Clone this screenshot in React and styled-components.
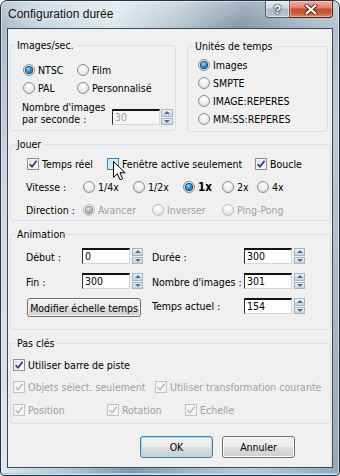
import styled, { createGlobalStyle } from 'styled-components';

const GlobalStyle = createGlobalStyle`
  html, body {
    margin: 0;
    padding: 0;
    background: #ffffff;
  }
  body {
    font-family: 'DejaVu Sans Condensed', 'Liberation Sans', Arial, sans-serif;
    font-size: 10.5px;
    color: #000;
  }
`;

const CheckMark = ({ disabled }) => (
  <svg width="10" height="10" viewBox="0 0 10 10">
    <path
      d="M1.6 5.2 L4 7.8 L8.6 1.8"
      fill="none"
      stroke={disabled ? '#a8a8a8' : '#27387a'}
      strokeWidth={disabled ? 1.1 : 1.7}
    />
  </svg>
);

const Radio = ({ on, disabled, bold, children }) => (
  <Choice $disabled={disabled} $bold={bold}>
    <RadioDot $on={on} $disabled={disabled} />
    {children}
  </Choice>
);

const Check = ({ on, disabled, hover, children }) => (
  <Choice $disabled={disabled}>
    <CheckBox $disabled={disabled} $hover={hover}>
      {on && <CheckMark disabled={disabled} />}
    </CheckBox>
    {children}
  </Choice>
);

const SpinField = ({ value, disabled, gap = 2, spinWidth = 11 }) => (
  <Field $gap={gap}>
    <Edit $disabled={disabled}>{value}</Edit>
    <Spin $w={spinWidth}>
      <SpinHalf>
        <Arrow $up />
      </SpinHalf>
      <SpinHalf>
        <Arrow />
      </SpinHalf>
    </Spin>
  </Field>
);

const Cursor = () => (
  <CursorWrap>
    <svg width="13" height="20" viewBox="0 0 13 20">
      <path
        d="M0.5 0.5 L0.5 16.5 L4.3 12.8 L7 18.8 L9.6 17.7 L7 11.8 L12.2 11.8 Z"
        fill="#fff"
        stroke="#000"
        strokeWidth="1"
        strokeLinejoin="miter"
      />
    </svg>
  </CursorWrap>
);

const App = () => (
  <>
    <GlobalStyle />
    <Window>
      <TitleBar>
        <Title>Configuration durée</Title>
        <CaptionButtons>
          <HelpButton>?</HelpButton>
          <CloseButton>
            <svg width="14" height="11" viewBox="0 0 14 11">
              <path d="M2.5 1.5 L11.5 9.5 M11.5 1.5 L2.5 9.5" stroke="#5b2418" strokeWidth="4" strokeLinecap="round" />
              <path d="M2.5 1.5 L11.5 9.5 M11.5 1.5 L2.5 9.5" stroke="#fff" strokeWidth="2.2" strokeLinecap="round" />
            </svg>
          </CloseButton>
        </CaptionButtons>
      </TitleBar>

      <Client>
        <TopRow>
          <Group $w={166} $h={92}>
            <Legend>Images/sec.</Legend>
            <Body $pad="10px 0 0 12px">
              <Line $cols="54px auto" $h={18}>
                <Radio on>NTSC</Radio>
                <Radio>Film</Radio>
              </Line>
              <Line $cols="54px auto" $h={18}>
                <Radio>PAL</Radio>
                <Radio>Personnalisé</Radio>
              </Line>
              <RateRow>
                <RateLabel>
                  Nombre d'images
                  <br />
                  par seconde :
                </RateLabel>
                <SpinField value="30" disabled gap={1} spinWidth={12} />
              </RateRow>
            </Body>
          </Group>

          <Group $w={141} $h={92}>
            <Legend $x={5}>Unités de temps</Legend>
            <Body $pad="4px 0 0 10px">
              <Line $cols="auto" $h={18}>
                <Radio on>Images</Radio>
              </Line>
              <Line $cols="auto" $h={18}>
                <Radio>SMPTE</Radio>
              </Line>
              <Line $cols="auto" $h={18}>
                <Radio>IMAGE:REPERES</Radio>
              </Line>
              <Line $cols="auto" $h={18}>
                <Radio>MM:SS:REPERES</Radio>
              </Line>
            </Body>
          </Group>
        </TopRow>

        <Group $h={83}>
          <Legend>Jouer</Legend>
          <Body $pad="5px 0 0 15px" $gap={6}>
            <Line $cols="80px 148px auto" $h={17} $indent={1}>
              <Check on>Temps réel</Check>
              <Check hover>Fenêtre active seulement</Check>
              <Check on>Boucle</Check>
            </Line>
            <Line $cols="57px 50px 50px 39px 35px auto" $h={17}>
              <span>Vitesse :</span>
              <Radio>1/4x</Radio>
              <Radio>1/2x</Radio>
              <Radio on bold>1x</Radio>
              <Radio>2x</Radio>
              <Radio>4x</Radio>
            </Line>
            <Line $cols="57px 69px 70px auto" $h={17}>
              <span>Direction :</span>
              <Radio on disabled>Avancer</Radio>
              <Radio disabled>Inverser</Radio>
              <Radio disabled>Ping-Pong</Radio>
            </Line>
          </Body>
        </Group>

        <Group $h={102}>
          <Legend>Animation</Legend>
          <Body $pad="8px 0 0 15px" $gap={9}>
            <Line $cols="56px 70px 92px auto" $h={16}>
              <FieldLabel>Début :</FieldLabel>
              <SpinField value="0" />
              <FieldLabel>Durée :</FieldLabel>
              <SpinField value="300" />
            </Line>
            <Line $cols="56px 70px 92px auto" $h={16}>
              <FieldLabel>Fin :</FieldLabel>
              <SpinField value="300" />
              <FieldLabel>Nombre d'images :</FieldLabel>
              <SpinField value="301" />
            </Line>
            <Line $cols="126px 92px auto" $h={19} $align="start">
              <PushButton $w={114} $h={19} $indent={1}>
                Modifier échelle temps
              </PushButton>
              <FieldLabel>Temps actuel :</FieldLabel>
              <SpinField value="154" />
            </Line>
          </Body>
        </Group>

        <Group $h={87}>
          <Legend>Pas clés</Legend>
          <Body $pad="7px 0 0 2px" $gap={5}>
            <Line $cols="auto" $h={17}>
              <Check on>Utiliser barre de piste</Check>
            </Line>
            <Line $cols="142px auto" $h={17}>
              <Check on disabled>Objets sélect. seulement</Check>
              <Check on disabled>Utiliser transformation courante</Check>
            </Line>
            <Line $cols="94px 78px auto" $h={17} $top={1}>
              <Check on disabled>Position</Check>
              <Check on disabled>Rotation</Check>
              <Check on disabled>Echelle</Check>
            </Line>
          </Body>
        </Group>

        <Footer>
          <PushButton $w={73} $h={22} $default>
            OK
          </PushButton>
          <PushButton $w={73} $h={22}>
            Annuler
          </PushButton>
        </Footer>
      </Client>

      <Cursor />
    </Window>
  </>
);

export default App;

const Window = styled.div`
  position: relative;
  width: 340px;
  height: 476px;
  box-sizing: border-box;
  display: flex;
  flex-direction: column;
  padding: 0 6px 7px;
  border: 1px solid #27323c;
  border-radius: 7px 7px 4px 4px;
  overflow: hidden;
  background:
    linear-gradient(to bottom, rgba(255, 255, 255, 0.3) 0, rgba(255, 255, 255, 0) 28px),
    linear-gradient(
      104deg,
      #a2b4c3 0%,
      #cbd7e0 10%,
      #dde6ec 26%,
      #b7c6d1 40%,
      #8197aa 54%,
      #a3b4c2 66%,
      #bccad4 80%,
      #93a8b9 100%
    );
  box-shadow:
    inset 0 0 0 1px rgba(255, 255, 255, 0.45),
    inset 0 -2px 0 #9fd3ea;
`;

const TitleBar = styled.div`
  height: 27px;
  flex: none;
  display: flex;
  align-items: flex-start;
`;

const Title = styled.div`
  margin: 6px 0 0 1px;
  font-family: 'Liberation Sans', Arial, sans-serif;
  font-size: 12px;
  line-height: 14px;
  color: #111;
  text-shadow: 0 0 6px rgba(255, 255, 255, 0.9);
`;

const CaptionButtons = styled.div`
  margin-left: auto;
  display: flex;
  height: 17px;
`;

const HelpButton = styled.div`
  width: 25px;
  box-sizing: border-box;
  border: 1px solid #4d5b67;
  border-top: none;
  border-radius: 0 0 0 4px;
  background: linear-gradient(#e4eaef 0%, #ccd6de 45%, #a9b7c3 52%, #bac7d1 100%);
  box-shadow: inset 0 0 0 1px rgba(255, 255, 255, 0.5);
  display: flex;
  align-items: center;
  justify-content: center;
  color: #fff;
  font: bold 13px 'Liberation Sans', Arial, sans-serif;
  text-shadow: 0 0 1px #2b3640, 0 0 2px #2b3640, 0 0 2px #2b3640;
`;

const CloseButton = styled.div`
  width: 43px;
  box-sizing: border-box;
  border: 1px solid #5a2216;
  border-top: none;
  border-left: none;
  border-radius: 0 0 4px 0;
  background: linear-gradient(#eeb2a3 0%, #dc806a 42%, #c34a2f 52%, #cf5c3d 78%, #e48e6a 100%);
  box-shadow: inset 0 0 0 1px rgba(255, 220, 210, 0.45);
  display: flex;
  align-items: center;
  justify-content: center;
`;

const Client = styled.div`
  flex: 1;
  display: flex;
  flex-direction: column;
  gap: 6px;
  padding: 10px 1px 0 2px;
  border: 1px solid #3b4752;
  background: #f0f0f0;
`;

const TopRow = styled.div`
  display: flex;
  gap: 11px;
`;

const Group = styled.fieldset`
  margin: 0;
  padding: 0;
  min-width: 0;
  box-sizing: border-box;
  width: ${(p) => (p.$w ? `${p.$w}px` : 'auto')};
  height: ${(p) => p.$h}px;
  flex: none;
  border: 1px solid #d5dfe5;
  border-radius: 3px;
  & + & {
    margin-top: 1px;
  }
`;

const Legend = styled.legend`
  margin-left: ${(p) => p.$x ?? 4}px;
  padding: 0 2px;
  font-size: 10.5px;
  line-height: 12px;
`;

const Body = styled.div`
  display: flex;
  flex-direction: column;
  gap: ${(p) => p.$gap ?? 0}px;
  padding: ${(p) => p.$pad};
`;

const Line = styled.div`
  display: grid;
  grid-template-columns: ${(p) => p.$cols};
  align-items: ${(p) => p.$align ?? 'center'};
  height: ${(p) => p.$h}px;
  padding-left: ${(p) => p.$indent ?? 0}px;
  margin-top: ${(p) => p.$top ?? 0}px;
  white-space: nowrap;
`;

const Choice = styled.label`
  display: inline-flex;
  align-items: center;
  gap: 3px;
  white-space: nowrap;
  color: ${(p) => (p.$disabled ? '#a0a0a0' : '#000')};
  font-weight: ${(p) => (p.$bold ? 'bold' : 'normal')};
  font-size: ${(p) => (p.$bold ? '11.5px' : '10.5px')};
`;

const RadioDot = styled.span`
  flex: none;
  width: 12px;
  height: 12px;
  box-sizing: border-box;
  border-radius: 50%;
  border: 1px solid ${(p) => (p.$disabled ? '#bdbdbd' : '#8c8c8c')};
  background: radial-gradient(circle at 50% 30%, #ffffff 0%, #ececec 55%, #d2d2d2 100%);
  display: flex;
  align-items: center;
  justify-content: center;

  &::after {
    content: '';
    display: ${(p) => (p.$on ? 'block' : 'none')};
    width: 6px;
    height: 6px;
    border-radius: 50%;
    background: ${(p) =>
      p.$disabled
        ? 'radial-gradient(circle at 40% 35%, #e6e6e6, #a9a9a9 60%, #8a8a8a)'
        : 'radial-gradient(circle at 40% 35%, #9ad8ff, #1e80c8 55%, #0a3c6c)'};
    box-shadow: 0 0 0 1px ${(p) => (p.$disabled ? '#8f8f8f' : '#1a3f62')};
  }
`;

const CheckBox = styled.span`
  flex: none;
  width: 12px;
  height: 12px;
  box-sizing: border-box;
  border: 1px solid
    ${(p) => (p.$hover ? '#3c7fb1' : p.$disabled ? '#c2c2c2' : '#8f8f8f')};
  background: ${(p) =>
    p.$hover
      ? 'linear-gradient(135deg, #bfe1f6, #eaf6fd)'
      : p.$disabled
      ? '#f4f4f4'
      : 'linear-gradient(135deg, #dcdcdc, #ffffff)'};
  box-shadow: inset 0 0 0 1px ${(p) => (p.$hover ? '#d7eefb' : '#f4f4f4')};
  display: flex;
  align-items: center;
  justify-content: center;
`;

const RateRow = styled.div`
  display: flex;
  align-items: flex-end;
  margin-top: 5px;
`;

const RateLabel = styled.div`
  width: 90px;
  margin-left: -1px;
  line-height: 11.5px;
`;

const FieldLabel = styled.span`
  padding-top: 2px;
`;

const Field = styled.div`
  display: flex;
  gap: ${(p) => p.$gap}px;
  height: 16px;
`;

const Edit = styled.div`
  width: 48px;
  box-sizing: border-box;
  padding-left: 2px;
  line-height: 13px;
  border-top: 2px solid #121212;
  border-left: 1px solid #2b2b2b;
  border-right: 1px solid #d6d6d6;
  border-bottom: 1px solid #d6d6d6;
  background: ${(p) => (p.$disabled ? '#f6f6f6' : '#ffffff')};
  color: ${(p) => (p.$disabled ? '#a0a0a0' : '#000')};
`;

const Spin = styled.div`
  width: ${(p) => p.$w}px;
  display: flex;
  flex-direction: column;
  gap: 1px;
`;

const SpinHalf = styled.div`
  flex: 1;
  box-sizing: border-box;
  border: 1px solid #a7b4c0;
  background: linear-gradient(#eef2f6, #c6d3de);
  display: flex;
  align-items: center;
  justify-content: center;
`;

const Arrow = styled.span`
  width: 0;
  height: 0;
  border-left: 3px solid transparent;
  border-right: 3px solid transparent;
  ${(p) =>
    p.$up ? 'border-bottom: 3px solid #4a6f93;' : 'border-top: 3px solid #4a6f93;'}
`;

const PushButton = styled.button`
  width: ${(p) => p.$w}px;
  height: ${(p) => p.$h}px;
  margin-left: ${(p) => p.$indent ?? 0}px;
  padding: 0;
  box-sizing: border-box;
  font-family: inherit;
  font-size: 10.5px;
  color: #000;
  white-space: nowrap;
  border: 1px solid ${(p) => (p.$default ? '#3c7fb1' : '#707070')};
  border-radius: 3px;
  background: linear-gradient(#f2f2f2 0%, #ebebeb 48%, #dddddd 52%, #cfcfcf 100%);
  box-shadow: inset 0 0 0 1px ${(p) => (p.$default ? '#9fdcf6' : '#fbfbfb')};
`;

const Footer = styled.div`
  display: flex;
  justify-content: flex-end;
  gap: 9px;
  margin-top: 6px;
  padding-right: 36px;
`;

const CursorWrap = styled.div`
  position: absolute;
  left: 112px;
  top: 160px;
  width: 13px;
  height: 20px;
  pointer-events: none;
`;
